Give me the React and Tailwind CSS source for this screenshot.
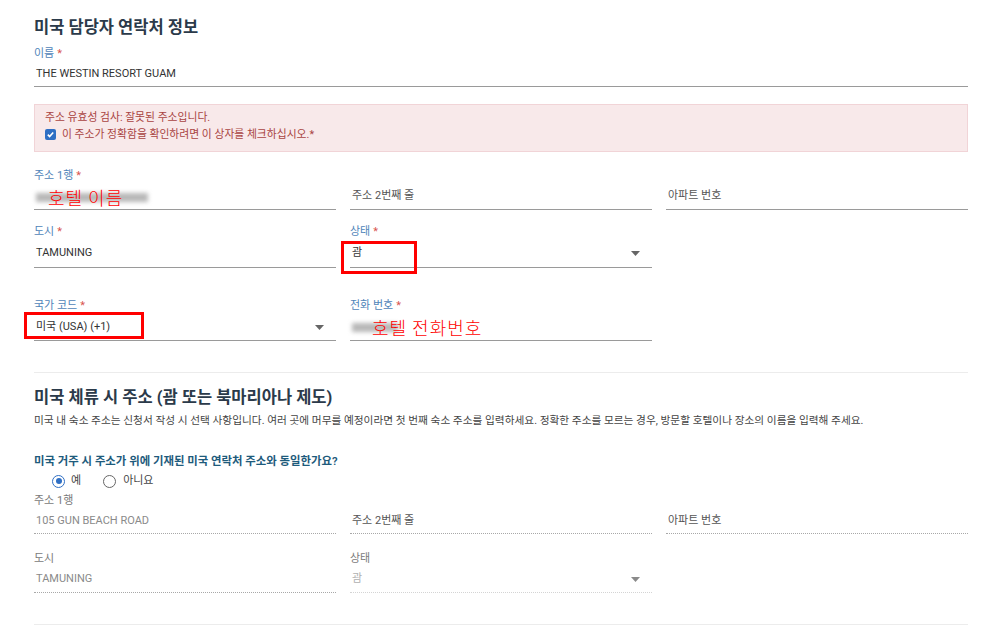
import React from 'react';

const FONT = { fontFamily: "Roboto, 'Noto Sans CJK KR', 'Noto Sans', sans-serif" };

const Caret = ({ className = 'text-[#666]' }) => (
    <svg width="9" height="5" viewBox="0 0 9 5" className={className}>
        <path d="M0 0h9L4.5 5z" fill="currentColor" />
    </svg>
);

// Label row above an input; empty fields keep the row so the lines stay aligned
const Label = ({ text, required, muted }) => (
    <div className={`h-4 text-[11px] leading-4 ${muted ? 'text-[#7a7a7a]' : 'text-[#4f84b9]'}`}>
        {text}
        {required && <span className="text-[#d9534f] ml-[3px]">*</span>}
    </div>
);

const Field = ({ label, required, value, placeholder, select, muted, dim, h = 'h-[26px]', children }) => (
    <div>
        <Label text={label} required={required} muted={muted} />
        <div
            className={`relative flex items-center ${h} text-[11px] ${
                muted ? 'border-b border-dotted ' + (dim ? 'border-[#d4d4d4]' : 'border-[#a8a8a8]') : 'border-b border-[#9a9a9a]'
            }`}
        >
            <span
                className={`flex-1 pl-[2px] ${
                    value ? (dim ? 'text-[#b0b0b0]' : muted ? 'text-[#8a8a8a]' : 'text-[#333]') : 'text-[#555]'
                }`}
            >
                {value || placeholder}
            </span>
            {select && (
                <span className="mr-[12px]">
                    <Caret className={muted ? 'text-[#8a8a8a]' : 'text-[#666]'} />
                </span>
            )}
            {children}
        </div>
    </div>
);

// Blurred-out original value with the red hand-written note on top
const Redacted = ({ note, barW, noteLeft }) => (
    <>
        <span className="absolute left-[2px] top-[9px] h-[9px] bg-[#b8b8b8] blur-[2px]" style={{ width: barW }} />
        <span
            className="absolute top-[1px] text-[18px] leading-6 text-[#ff0000] tracking-[1px]"
            style={{ left: noteLeft, fontFamily: "'Noto Sans CJK KR', sans-serif", fontWeight: 300 }}
        >
            {note}
        </span>
    </>
);

const App = () => {
    return (
        <div className="bg-white min-h-screen pt-4 pl-[34px] pr-[26px]" style={FONT}>
            {/* Contact in the US */}
            <h2 className="text-[16.5px] leading-6 font-bold text-[#2b3a4a]">미국 담당자 연락처 정보</h2>
            <div className="mt-[6px]">
                <Field label="이름" required value="THE WESTIN RESORT GUAM" h="h-[25px]" />
            </div>

            <div className="mt-[17px] border border-[#f1d4d7] bg-[#f8e9ea] pl-[10px] pt-[4px] pb-[8px] text-[10.8px] leading-[17px] text-[#a94442]">
                <div>주소 유효성 검사: 잘못된 주소입니다.</div>
                <label className="flex items-center gap-[6px]">
                    <span className="w-[11px] h-[11px] rounded-[2px] bg-[#2f6fc4] flex items-center justify-center">
                        <svg width="9" height="9" viewBox="0 0 10 10">
                            <path d="M2 5.2l2 2 4-4.4" stroke="white" strokeWidth="1.8" fill="none" />
                        </svg>
                    </span>
                    이 주소가 정확함을 확인하려면 이 상자를 체크하십시오.*
                </label>
            </div>

            <div className="mt-[16px] grid grid-cols-3 gap-x-[14px]">
                <Field label="주소 1행" required>
                    <Redacted note="호텔 이름" barW={112} noteLeft={14} />
                </Field>
                <Field label="" placeholder="주소 2번째 줄" />
                <Field label="" placeholder="아파트 번호" />
            </div>

            <div className="mt-[14px] grid grid-cols-3 gap-x-[14px]">
                <Field label="도시" required value="TAMUNING" h="h-[28px]" />
                <Field label="상태" required value="괌" select h="h-[28px]">
                    <span className="absolute left-[-9px] top-[1px] w-[76px] h-[33px] border-[3px] border-[#ff0000]" />
                </Field>
                <div />
            </div>

            <div className="mt-[30px] grid grid-cols-3 gap-x-[14px]">
                <Field label="국가 코드" required value="미국 (USA) (+1)" select h="h-[27px]">
                    <span className="absolute left-[-10px] top-[-2px] w-[120px] h-[27px] border-[3px] border-[#ff0000]" />
                </Field>
                <Field label="전화 번호" required h="h-[27px]">
                    <Redacted note="호텔 전화번호" barW={46} noteLeft={22} />
                </Field>
                <div />
            </div>

            <div className="mt-[31px] border-t border-[#ececec]" />

            {/* Address while staying in the US */}
            <h2 className="mt-[13px] text-[16.5px] leading-6 font-bold text-[#2b3a4a]">
                미국 체류 시 주소 (괌 또는 북마리아나 제도)
            </h2>
            <p className="mt-[3px] text-[10.7px] leading-4 text-[#444]">
                미국 내 숙소 주소는 신청서 작성 시 선택 사항입니다. 여러 곳에 머무를 예정이라면 첫 번째 숙소 주소를 입력하세요. 정확한 주소를 모르는 경우, 방문할 호텔이나 장소의 이름을 입력해 주세요.
            </p>

            <div className="mt-[24px] text-[11.4px] leading-4 font-semibold text-[#1e5b7c]">
                미국 거주 시 주소가 위에 기재된 미국 연락처 주소와 동일한가요?
            </div>
            <div className="mt-[4px] ml-[18px] flex items-center text-[11px] leading-4 text-[#444]">
                <span className="w-[13px] h-[13px] rounded-full border-[1.5px] border-[#2f6fc4] flex items-center justify-center">
                    <span className="w-[6px] h-[6px] rounded-full bg-[#2f6fc4]" />
                </span>
                <span className="ml-[6px]">예</span>
                <span className="ml-[22px] w-[13px] h-[13px] rounded-full border-[1.5px] border-[#666]" />
                <span className="ml-[7px]">아니요</span>
            </div>

            <div className="mt-[4px] grid grid-cols-3 gap-x-[14px]">
                <Field label="주소 1행" value="105 GUN BEACH ROAD" muted h="h-[25px]" />
                <Field label="" placeholder="주소 2번째 줄" muted h="h-[25px]" />
                <Field label="" placeholder="아파트 번호" muted h="h-[25px]" />
            </div>

            <div className="mt-[17px] grid grid-cols-3 gap-x-[14px]">
                <Field label="도시" value="TAMUNING" muted h="h-[26px]" />
                <Field label="상태" value="괌" select muted dim h="h-[26px]" />
                <div />
            </div>

            <div className="mt-[31px] border-t border-[#ececec]" />
        </div>
    );
};

export default App;
